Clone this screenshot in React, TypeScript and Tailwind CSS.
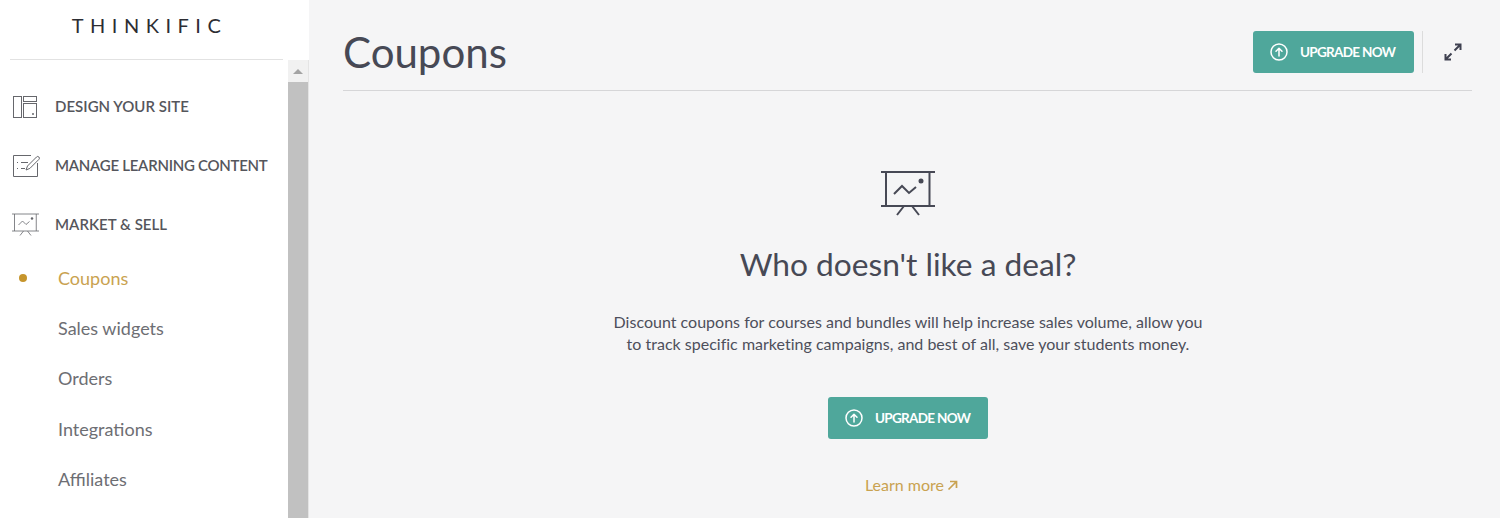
import React from 'react';

const FONT = "font-['Lato','Noto_Sans',sans-serif]";

const UpIcon = () => (
  <svg width="18" height="18" viewBox="0 0 18 18" fill="none" stroke="currentColor" strokeWidth="1.5" strokeLinecap="round" strokeLinejoin="round">
    <circle cx="9" cy="9" r="8" />
    <path d="M9 13V5.5M6 8.3l3-3 3 3" />
  </svg>
);

const UpgradeButton: React.FC<{ width: string }> = ({ width }) => (
  <button className={`${width} h-[42px] flex items-center pl-[17px] gap-[12px] bg-[#4fa79b] rounded-[3px] text-white`}>
    <UpIcon />
    <span className="text-[13.5px] font-bold tracking-[-0.7px]">UPGRADE NOW</span>
  </button>
);

const LayoutIcon = () => (
  <svg width="26" height="24" viewBox="0 0 26 24" fill="none" stroke="#66676c" strokeWidth="1">
    <rect x="1.5" y="1.5" width="8" height="21" />
    <rect x="11.5" y="1.5" width="13" height="5" />
    <rect x="11.5" y="8.5" width="13" height="14" />
    <circle cx="21" cy="19" r="1" fill="#66676c" stroke="none" />
  </svg>
);

const EditIcon = () => (
  <svg width="28" height="24" viewBox="0 0 28 24" fill="none" stroke="#66676c" strokeWidth="1">
    <path d="M19 1.5H1.5v21h24V9" />
    <path d="M5 8.5h1M5 14.5h1M9 8.5h7M9 14.5h4" />
    <path d="M14 16l1.5-4 9-9a1.6 1.6 0 0 1 2.4 2.4l-9 9z" />
  </svg>
);

const BoardIcon: React.FC<{ size: number; height: number; stroke: number; color: string }> = ({ size, height, stroke, color }) => (
  <svg width={size} height={height} viewBox="0 0 54 46" fill="none" stroke={color} strokeWidth={stroke}>
    <path d="M0 1h54M5 1v34M48.500 1v34M0 35h54" />
    <path d="M13 23l8-8 7 7 7-6" />
    <circle cx="40" cy="10" r="2.5" fill={color} stroke="none" />
    <path d="M23 35l-7 9M31 35l7 9" />
  </svg>
);

const ExpandIcon = () => (
  <svg width="18" height="18" viewBox="0 0 18 18" fill="none" stroke="#3f4150" strokeWidth="2">
    <path d="M10.500 7.500L16.500 1.500M11 1.500h5.500V7" />
    <path d="M7.500 10.500L1.500 16.500M7 16.500H1.500V11" />
  </svg>
);

const SectionItem: React.FC<{ icon: React.ReactNode; label: string; tracking: string }> = ({ icon, label, tracking }) => (
  <div className="h-[59px] flex items-center">
    <div className="w-[55px] pl-[12px] shrink-0">{icon}</div>
    <span className={`text-[15px] font-semibold text-[#55565c] whitespace-nowrap ${tracking}`}>{label}</span>
  </div>
);

const SubItem: React.FC<{ label: string; active?: boolean }> = ({ label, active }) => (
  <div className="h-[50.4px] flex items-center">
    <div className="w-[58px] pl-[19px] shrink-0">
      {active && <div className="w-[8px] h-[8px] rounded-full bg-[#c6952c]" />}
    </div>
    <span className={`text-[18px] ${active ? 'text-[#c9a250]' : 'text-[#6d6e73]'}`}>{label}</span>
  </div>
);

export default function App() {
  return (
    <div className={`w-[1500px] h-[518px] overflow-hidden flex bg-[#f5f5f6] ${FONT}`}>
      <aside className="w-[309px] shrink-0 flex flex-col bg-white">
        <div className="h-[60px] shrink-0 mx-[10px] mr-[26px] flex items-start justify-center border-b border-[#e2e2e2] pt-[11px]">
          <span className="text-[20px] leading-[28px] font-normal text-[#2c2d33] tracking-[6.5px] pl-[6px]">THINKIFIC</span>
        </div>
        <div className="flex-1 flex min-h-0">
          <nav className="flex-1 pt-[17px] min-w-0">
            <SectionItem icon={<LayoutIcon />} label="DESIGN YOUR SITE" tracking="tracking-[0.02px]" />
            <SectionItem icon={<EditIcon />} label="MANAGE LEARNING CONTENT" tracking="tracking-[-0.27px]" />
            <SectionItem icon={<BoardIcon size={27} height={24} stroke={1.6} color="#66676c" />} label="MARKET & SELL" tracking="tracking-[0.03px]" />
            <div className="-mt-[1px]">
              <SubItem label="Coupons" active />
              <SubItem label="Sales widgets" />
              <SubItem label="Orders" />
              <SubItem label="Integrations" />
              <SubItem label="Affiliates" />
            </div>
          </nav>
          <div className="w-[21px] shrink-0 flex flex-col bg-[#f1f1f1] border-r border-[#e4e4e4]">
            <div className="h-[22px] flex items-center justify-center">
              <div className="w-0 h-0 border-x-[5px] border-x-transparent border-b-[5px] border-b-[#a3a3a3]" />
            </div>
            <div className="flex-1 bg-[#c1c1c1]" />
          </div>
        </div>
      </aside>
      <main className="flex-1 min-w-0 pl-[34px] pr-[28px] flex flex-col">
        <header className="h-[91px] shrink-0 flex items-center border-b border-[#d6d6d8] pt-[14px]">
          <h1 className="text-[42px] text-[#474955] font-normal flex-1">Coupons</h1>
          <UpgradeButton width="w-[161px]" />
          <div className="w-px h-[42px] bg-[#dcdcdc] ml-[8px] mr-[21px]" />
          <div className="mr-[10px] flex"><ExpandIcon /></div>
        </header>
        <section className="flex flex-col items-center pt-[80px] pl-[1px]">
          <BoardIcon size={54} height={46} stroke={2} color="#474955" />
          <h2 className="mt-[26px] text-[31.700px] leading-[42px] text-[#474955] font-normal">Who doesn't like a deal?</h2>
          <p className="mt-[26px] text-center text-[16px] tracking-[0.01px] leading-[22px] text-[#4d4f5b]">
            Discount coupons for courses and bundles will help increase sales volume, allow you
            <br />
            to track specific marketing campaigns, and best of all, save your students money.
          </p>
          <div className="mt-[42px]"><UpgradeButton width="w-[160px]" /></div>
          <a className="mt-[35px] pl-[7px] text-[16px] leading-[22px] text-[#c9a250] flex items-center gap-[3px]">
            Learn more
            <svg width="11" height="11" viewBox="0 0 11 11" fill="none" stroke="currentColor" strokeWidth="1.7"><path d="M1.500 9.500l8-8M3 1.500h6.500V8" /></svg>
          </a>
        </section>
      </main>
    </div>
  );
}
